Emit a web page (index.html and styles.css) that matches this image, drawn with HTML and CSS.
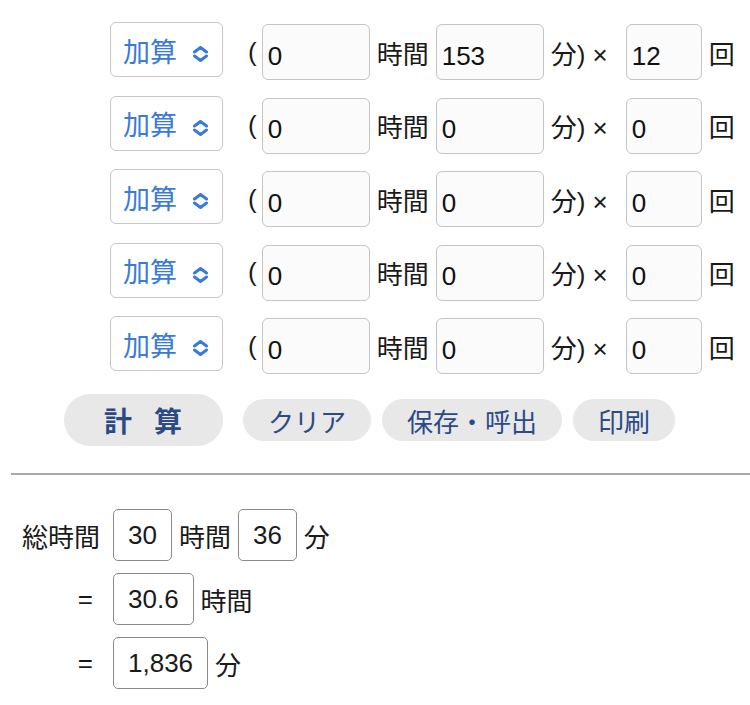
FILE: index.html
```html
<!DOCTYPE html>
<html lang="ja">
<head>
    <meta charset="UTF-8">
    <meta name="viewport" content="width=device-width, initial-scale=1.0">
    <title>時間計算</title>
    <link rel="stylesheet" href="styles.css">
</head>
<body>
    <div id="calc">
        <div class="rows" id="rows">
            <div class="row">
                <div class="op">
                    <select><option>加算</option><option>減算</option></select>
                    <svg class="chev" viewBox="0 0 16 16"><path d="M2 6 L8 1.5 L14 6 M2 10 L8 14.5 L14 10"/></svg>
                </div>
                <span class="paren">(</span><input class="hr" type="text" value="0">
                <span class="unit">時間</span><input class="min" type="text" value="153">
                <span class="unit times">分) ×</span><input class="cnt" type="text" value="12">
                <span class="unit">回</span>
            </div>
            <div class="row">
                <div class="op">
                    <select><option>加算</option><option>減算</option></select>
                    <svg class="chev" viewBox="0 0 16 16"><path d="M2 6 L8 1.5 L14 6 M2 10 L8 14.5 L14 10"/></svg>
                </div>
                <span class="paren">(</span><input class="hr" type="text" value="0">
                <span class="unit">時間</span><input class="min" type="text" value="0">
                <span class="unit times">分) ×</span><input class="cnt" type="text" value="0">
                <span class="unit">回</span>
            </div>
            <div class="row">
                <div class="op">
                    <select><option>加算</option><option>減算</option></select>
                    <svg class="chev" viewBox="0 0 16 16"><path d="M2 6 L8 1.5 L14 6 M2 10 L8 14.5 L14 10"/></svg>
                </div>
                <span class="paren">(</span><input class="hr" type="text" value="0">
                <span class="unit">時間</span><input class="min" type="text" value="0">
                <span class="unit times">分) ×</span><input class="cnt" type="text" value="0">
                <span class="unit">回</span>
            </div>
            <div class="row">
                <div class="op">
                    <select><option>加算</option><option>減算</option></select>
                    <svg class="chev" viewBox="0 0 16 16"><path d="M2 6 L8 1.5 L14 6 M2 10 L8 14.5 L14 10"/></svg>
                </div>
                <span class="paren">(</span><input class="hr" type="text" value="0">
                <span class="unit">時間</span><input class="min" type="text" value="0">
                <span class="unit times">分) ×</span><input class="cnt" type="text" value="0">
                <span class="unit">回</span>
            </div>
            <div class="row">
                <div class="op">
                    <select><option>加算</option><option>減算</option></select>
                    <svg class="chev" viewBox="0 0 16 16"><path d="M2 6 L8 1.5 L14 6 M2 10 L8 14.5 L14 10"/></svg>
                </div>
                <span class="paren">(</span><input class="hr" type="text" value="0">
                <span class="unit">時間</span><input class="min" type="text" value="0">
                <span class="unit times">分) ×</span><input class="cnt" type="text" value="0">
                <span class="unit">回</span>
            </div>
        </div>

        <div class="buttons">
            <button class="btn calc-btn">計算</button>
            <button class="btn">クリア</button>
            <button class="btn">保存・呼出</button>
            <button class="btn">印刷</button>
        </div>
    </div>

    <hr class="sep">

    <div class="result">
        <span class="label">総時間</span>
        <div class="line">
            <span class="out">30</span><span class="unit">時間</span><span class="out">36</span><span class="unit">分</span>
        </div>
        <span class="label eq">=</span>
        <div class="line">
            <span class="out">30.6</span><span class="unit">時間</span>
        </div>
        <span class="label eq">=</span>
        <div class="line">
            <span class="out">1,836</span><span class="unit">分</span>
        </div>
    </div>
</body>
</html>
```

FILE: styles.css
```css
/* Page */
body {
    font-family: "Liberation Sans", "Noto Sans CJK JP", sans-serif;
    font-size: 26px;
    color: #1a1a1a;
    background-color: #fff;
    margin: 0;
    padding: 0;
}

#calc {
    padding: 24px 0 0 110px;
}

/* Input rows */
.rows {
    display: flex;
    flex-direction: column;
    gap: 17.5px;
}

.row {
    display: flex;
    align-items: center;
    height: 56px;
}

.op {
    position: relative;
    width: 113px;
    height: 55px;
    margin-top: -5px;
}

.op select {
    appearance: none;
    -webkit-appearance: none;
    width: 100%;
    height: 100%;
    font-family: inherit;
    font-size: 27px;
    color: #3a7ad8;
    background-color: #fff;
    border: 1px solid #c6c6c6;
    border-radius: 6px;
    padding: 6px 0 0 12px;
    margin: 0;
}

.chev {
    position: absolute;
    right: 14px;
    top: 24px;
    width: 17px;
    height: 16px;
    fill: none;
    stroke: #3a7ad8;
    stroke-width: 3;
    stroke-linecap: round;
    stroke-linejoin: round;
    pointer-events: none;
}

.paren {
    margin: 0 5px 0 25px;
}

input {
    font-family: inherit;
    font-size: 26px;
    color: #111;
    height: 56px;
    box-sizing: border-box;
    padding: 8px 5px 0 5px;
    border: 1px solid #c4c4c4;
    border-radius: 6px;
    background-color: #fbfbfb;
    margin: 0;
}

.hr, .min {
    width: 108px;
}

.cnt {
    width: 76px;
}

.unit {
    margin: 0 7px;
    white-space: pre;
}

.times {
    margin-right: 18px;
}

/* Buttons */
.buttons {
    display: flex;
    align-items: center;
    gap: 11px;
    margin: 20px 0 0 -46px;
    height: 52px;
}

.btn {
    font-family: inherit;
    font-size: 26px;
    color: #2c4a86;
    background-color: #e8e8e8;
    border: none;
    height: 42px;
    padding: 0 25px;
    border-radius: 21px;
    cursor: pointer;
}

.calc-btn {
    font-size: 28px;
    font-weight: bold;
    letter-spacing: 22px;
    height: 52px;
    padding: 0 19px 0 40px;
    border-radius: 26px;
    margin-right: 9px;
}

/* Separator */
.sep {
    border: none;
    border-top: 2px solid #a8a8a8;
    margin: 27px 0 0 11px;
    height: 0;
}

/* Result */
.result {
    display: grid;
    grid-template-columns: 93px auto;
    row-gap: 12px;
    align-items: center;
    padding: 34px 0 0 0;
}

.label {
    justify-self: end;
}

.result .label:first-child {
    margin-right: -7px;
}

.line {
    display: flex;
    align-items: center;
    margin-left: 20px;
    height: 52px;
}

.out {
    display: inline-block;
    height: 52px;
    line-height: 50px;
    box-sizing: border-box;
    padding: 0 14px;
    border: 1px solid #8a8a8a;
    border-radius: 5px;
}

.line .unit {
    margin: 0 7px;
}
```
